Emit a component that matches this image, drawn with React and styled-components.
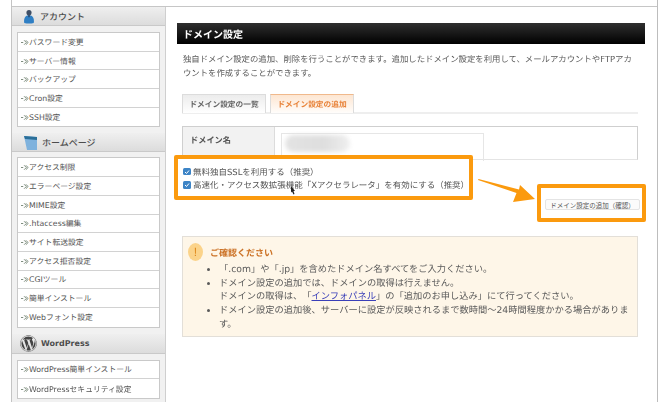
import React from "react";
import styled, { createGlobalStyle } from "styled-components";
import { FaWordpress } from "react-icons/fa";

const Global = createGlobalStyle`
  html, body { margin: 0; padding: 0; background: #fff; }
  body { width: 664px; height: 402px; overflow: hidden; font-family: "DejaVu Sans", "Noto Sans CJK JP", sans-serif; color: #555; text-spacing-trim: space-all; text-rendering: geometricPrecision; }
  * { box-sizing: border-box; }
`;
const Frame = styled.div`
  width: 664px; height: 402px; overflow: hidden; padding-left: 11px; filter: blur(0.45px);
`;
const Page = styled.div`
  position: relative; width: 647px; height: 402px; border-left: 1px solid #c4c4c4; border-right: 1px solid #bdbdbd;
`;
const TopBand = styled.div`height: 7px; border-bottom: 1px solid #c6c6c6;`;
const Columns = styled.div`display: flex; height: 395px;`;
const Sidebar = styled.aside`
  width: 154px; flex: none; background: #f1f1f1; border-right: 1px solid #cfcfcf;
`;
const SectionHead = styled.h2`
  display: flex; align-items: center; gap: ${p => p.$gap || 5}px; height: ${p => p.$h || 19}px; margin: 0; padding-left: ${p => p.$pad || 11}px;
  background: linear-gradient(#efefef, #dcdcdc); border-bottom: 1px solid #c9c9c9;
  font-size: ${p => p.$bold ? 8 : 9}px; font-weight: ${p => p.$bold ? 700 : 500}; color: #4d4d4d;
`;
const NavList = styled.ul`
  list-style: none; margin: ${p => p.$top ?? 6}px 5px 6px; padding: 0; background: #fff; border: 1px solid #c9c9c9;
`;
const NavItem = styled.li`
  display: flex; align-items: center; height: 18.7px; padding: 1px 0 0 3px; font-size: 7.8px; color: #555;
  border-bottom: 1px solid #d2d2d2;
  &:last-child { border-bottom: 0; }
`;
const Main = styled.main`flex: 1; padding: 16px 12px 0 11px; min-width: 0;`;
const Title = styled.h1`
  margin: 0; height: 21px; padding-left: 6px; display: flex; align-items: center; color: #fff; font-size: 10px; font-weight: 700;
  background: linear-gradient(#2f2f2f, #000);
`;
const Body = styled.div`padding: 0 7px 0 5px;`;
const Lead = styled.p`
  margin: 9px 0 0 1px; font-size: 8.4px; line-height: 13.5px; color: #5a5a5a; height: 27px; white-space: nowrap;
`;
const Tabs = styled.div`
  display: flex; gap: 4px; margin-top: 14px; height: 20px; border-bottom: 2px solid #eee;
`;
const Tab = styled.div`
  width: 84px; height: 19px; display: flex; align-items: center; justify-content: center; font-size: 7.7px; font-weight: 700;
  color: ${p => p.$active ? "#e8833a" : "#666"};
  background: ${p => p.$active ? "linear-gradient(#fde6d2, #fffdfb)" : "linear-gradient(#ececec, #fff)"};
  border: 1px solid #dcdcdc; border-bottom: 0;
  border-top-color: ${p => p.$active ? "#f0b98c" : "#dcdcdc"};
`;
const FormTable = styled.div`
  display: flex; margin-top: 12px; height: 34px; border: 1px solid #cfcfcf; border-bottom-color: #e4e4e4; background: #fff;
`;
const LabelCell = styled.div`
  width: 92px; padding: 0 0 6px 7px; display: flex; align-items: center; background: #f2f2f2; border-right: 1px solid #dcdcdc;
  font-size: 8.2px; font-weight: 700; color: #555;
`;
const InputCell = styled.div`flex: 1; padding: 6px 0 0 6px;`;
const DomainInput = styled.div`
  width: 203px; height: 28px; padding: 1px 0 0 3px; border: 1px solid #e6e6e6; border-bottom: 0;
`;
const Smudge = styled.div`
  width: 65px; height: 17px; border-radius: 9px; filter: blur(2px);
  background: linear-gradient(90deg, #e3e3e3, #dedede 60%, #efefef);
`;
const CheckGroup = styled.div`
  position: relative; width: 299px; height: 45px; margin: -5px 0 0 -8px; padding: 6px 0 0 5px; background: #fff;
  border: 4px solid #fb9a0e; border-radius: 2px;
`;
const CheckRow = styled.label`
  display: flex; align-items: center; gap: 2.5px; height: 13.3px; font-size: 8.48px; color: #555; white-space: nowrap;
`;
const CheckMark = styled.span`
  width: 7.5px; height: 7.5px; flex: none; border-radius: 1.5px; background: #3d84c6; display: flex; align-items: center; justify-content: center;
`;
const ButtonRow = styled.div`display: flex; justify-content: flex-end; margin: -16px -8px 0 0;`;
const ButtonHighlight = styled.div`
  width: 109px; height: 38px; padding: 11px 0 0 4px; background: #fff; border: 4px solid #fb9a0e; border-radius: 2px; position: relative;
`;
const ConfirmButton = styled.button`
  display: block; width: 95px; height: 11px; padding: 0; border: 1px solid #e4e4e4; border-radius: 2px; background: #fbfbfb;
  font-family: inherit; font-size: 6.5px; color: #555; white-space: nowrap;
`;
const Notice = styled.section`
  margin-top: 14px; height: 101px; padding: 6px 6px 0 5px; background: #fef6e8; border: 1px solid #e3dfd8;
`;
const NoticeHead = styled.div`
  display: flex; align-items: center; gap: 7px; height: 18px; font-size: 9px; font-weight: 700; color: #cc7226;
`;
const Bang = styled.span`
  width: 15px; height: 18px; border-radius: 50%; background: #fbd38a; color: #e08a1e; font-size: 12px; font-weight: 400;
  display: flex; align-items: center; justify-content: center; font-family: "Liberation Sans", sans-serif;
`;
const NoticeList = styled.ul`
  margin: 2px 0 0; padding: 0 0 0 31px; font-size: 9.25px; line-height: 13.7px; color: #5a5a5a; white-space: nowrap;
`;
const Link = styled.a`color: #3a3fb8; text-decoration: underline;`;
const ArrowOverlay = styled.svg`position: absolute; left: 452px; top: 175px; pointer-events: none;`;
const CursorOverlay = styled.svg`position: absolute; left: 278px; top: 186px; pointer-events: none;`;

const NavArrow = () => (
  <svg width="8" height="7" viewBox="0 0 9 7" fill="none" stroke="#6f7f6f" strokeWidth="1">
    <path d="M0 3.5h2.5M3.5 1l2.5 2.5L3.5 6M5.5 1L8 3.5 5.500 6" />
  </svg>
);
const AccountIcon = () => (
  <svg width="12" height="17" viewBox="0 0 14 17">
    <circle cx="7" cy="4" r="3" fill="#3f4f66" />
    <path d="M1.5 16c-1-5 1-9 5.500-9s6.500 4 5.500 9c-3 1-8 1-11 0z" fill="#2f7fc4" />
    <path d="M5.500 7h3l-1.500 3z" fill="#27415f" />
  </svg>
);
const HomeIcon = () => (
  <svg width="15" height="17" viewBox="0 0 15 17">
    <path d="M1 2l13 1v13H4z" fill="#7fb2dd" />
    <path d="M1 2l13 1v3L2 5z" fill="#2a6f99" />
  </svg>
);

const Nav = ({ items, top }) => (
  <NavList $top={top}>
    {items.map(t => <NavItem key={t}><NavArrow />{t}</NavItem>)}
  </NavList>
);
const Check = ({ children }) => (
  <CheckRow>
    <CheckMark>
      <svg width="6" height="6" viewBox="0 0 6 6" fill="none" stroke="#fff" strokeWidth="1"><path d="M1 3l1.500 1.500L5 1.500" /></svg>
    </CheckMark>
    {children}
  </CheckRow>
);

export default function App() {
  return (
    <Frame>
      <Global />
      <Page>
        <TopBand />
        <Columns>
          <Sidebar>
            <SectionHead><AccountIcon />アカウント</SectionHead>
            <Nav items={["パスワード変更", "サーバー情報", "バックアップ", "Cron設定", "SSH設定"]} />
            <SectionHead $gap={4}><HomeIcon />ホームページ</SectionHead>
            <Nav top={5} items={["アクセス制限", "エラーページ設定", "MIME設定", ".htaccess編集", "サイト転送設定", "アクセス拒否設定", "CGIツール", "簡単インストール", "Webフォント設定"]} />
            <SectionHead $h={20} $pad={8} $gap={4} $bold><FaWordpress size={17} color="#444" />WordPress</SectionHead>
            <Nav items={["WordPress簡単インストール", "WordPressセキュリティ設定"]} />
          </Sidebar>
          <Main>
            <Title>ドメイン設定</Title>
            <Body>
              <Lead>
                独自ドメイン設定の追加、削除を行うことができます。追加したドメイン設定を利用して、メールアカウントやFTPアカ<br />
                ウントを作成することができます。
              </Lead>
              <Tabs>
                <Tab>ドメイン設定の一覧</Tab>
                <Tab $active>ドメイン設定の追加</Tab>
              </Tabs>
              <FormTable>
                <LabelCell>ドメイン名</LabelCell>
                <InputCell><DomainInput><Smudge /></DomainInput></InputCell>
              </FormTable>
              <CheckGroup>
                <Check>無料独自SSLを利用する（推奨）</Check>
                <Check>高速化・アクセス数拡張機能「Xアクセラレータ」を有効にする（推奨）</Check>
              </CheckGroup>
              <ButtonRow>
                <ButtonHighlight><ConfirmButton>ドメイン設定の追加（確認）</ConfirmButton></ButtonHighlight>
              </ButtonRow>
              <Notice>
                <NoticeHead><Bang>!</Bang>ご確認ください</NoticeHead>
                <NoticeList>
                  <li>「.com」や「.jp」を含めたドメイン名すべてをご入力ください。</li>
                  <li>ドメイン設定の追加では、ドメインの取得は行えません。<br />ドメインの取得は、「<Link>インフォパネル</Link>」の「追加のお申し込み」にて行ってください。</li>
                  <li>ドメイン設定の追加後、サーバーに設定が反映されるまで数時間〜24時間程度かかる場合がありま<br />す。</li>
                </NoticeList>
              </Notice>
            </Body>
          </Main>
        </Columns>
        <ArrowOverlay width="74" height="32" viewBox="0 0 74 32">
          <path d="M14 5L14.500 4 55 14.500 56 10 71 24 49 27 52.500 18z" fill="#fb9a0e" />
        </ArrowOverlay>
        <CursorOverlay width="6" height="9" viewBox="0 0 6 9">
          <path d="M1 0l4 5H3.500L4.500 8 3.500 8.500 2 5.500 1 6.500z" fill="#222" />
        </CursorOverlay>
      </Page>
    </Frame>
  );
}
